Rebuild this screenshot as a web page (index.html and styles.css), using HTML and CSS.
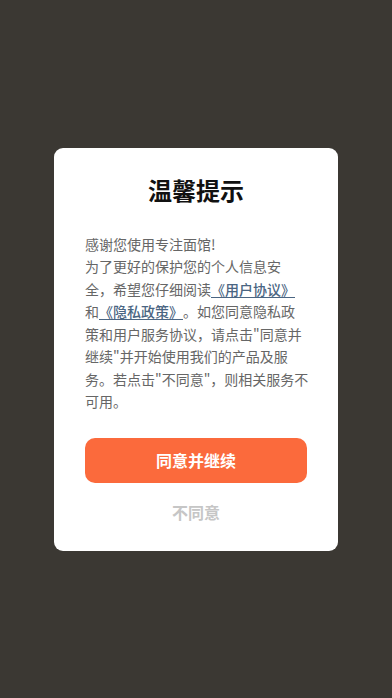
FILE: index.html
```html
<!DOCTYPE html>
<html lang="zh-CN">
<head>
<meta charset="utf-8">
<meta name="viewport" content="width=device-width, initial-scale=1">
<title>温馨提示</title>
<link rel="stylesheet" href="styles.css">
</head>
<body>
<div class="overlay">
  <div class="dialog">
    <h1 class="title">温馨提示</h1>
    <p class="content">感谢您使用专注面馆!<br>为了更好的保护您的个人信息安全，希望您仔细阅读<a class="link" href="#">《用户协议》</a>和<a class="link" href="#">《隐私政策》</a>。如您同意隐私政策和用户服务协议，请点击"同意并继续"并开始使用我们的产品及服务。若点击"不同意"，则相关服务不可用。</p>
    <button class="btn-agree" type="button">同意并继续</button>
    <button class="btn-disagree" type="button">不同意</button>
  </div>
</div>
</body>
</html>
```
FILE: styles.css
```css
html, body {
  margin: 0;
  padding: 0;
  height: 100%;
}
body {
  background: #3b3833;
  font-family: "Noto Sans CJK SC", "Noto Sans", sans-serif;
}
.overlay {
  height: 100%;
  display: flex;
  align-items: center;
  justify-content: center;
}
.dialog {
  width: 284px;
  box-sizing: border-box;
  padding: 25px 31px 28px;
  background: #ffffff;
  border-radius: 9px;
  display: flex;
  flex-direction: column;
}
.title {
  margin: 0;
  font-size: 24px;
  line-height: 34px;
  font-weight: 700;
  color: #111111;
  text-align: center;
}
.content {
  margin: 26px -1.5px 0 0;
  font-size: 14px;
  line-height: 22.5px;
  color: #666666;
  word-break: break-all;
  text-spacing-trim: space-all;
}
.link {
  color: #4a6582;
  font-weight: 500;
  text-decoration: underline;
  text-underline-offset: 2px;
}
.btn-agree {
  margin-top: 25px;
  height: 45px;
  border: none;
  border-radius: 10px;
  background: #fb6a3c;
  color: #ffffff;
  font-family: inherit;
  font-size: 16px;
  font-weight: 700;
  padding: 0;
}
.btn-disagree {
  margin-top: 18px;
  height: 22px;
  border: none;
  background: transparent;
  color: #c6c6c6;
  font-family: inherit;
  font-size: 16px;
  font-weight: 700;
  padding: 0;
  line-height: 22px;
}
```
